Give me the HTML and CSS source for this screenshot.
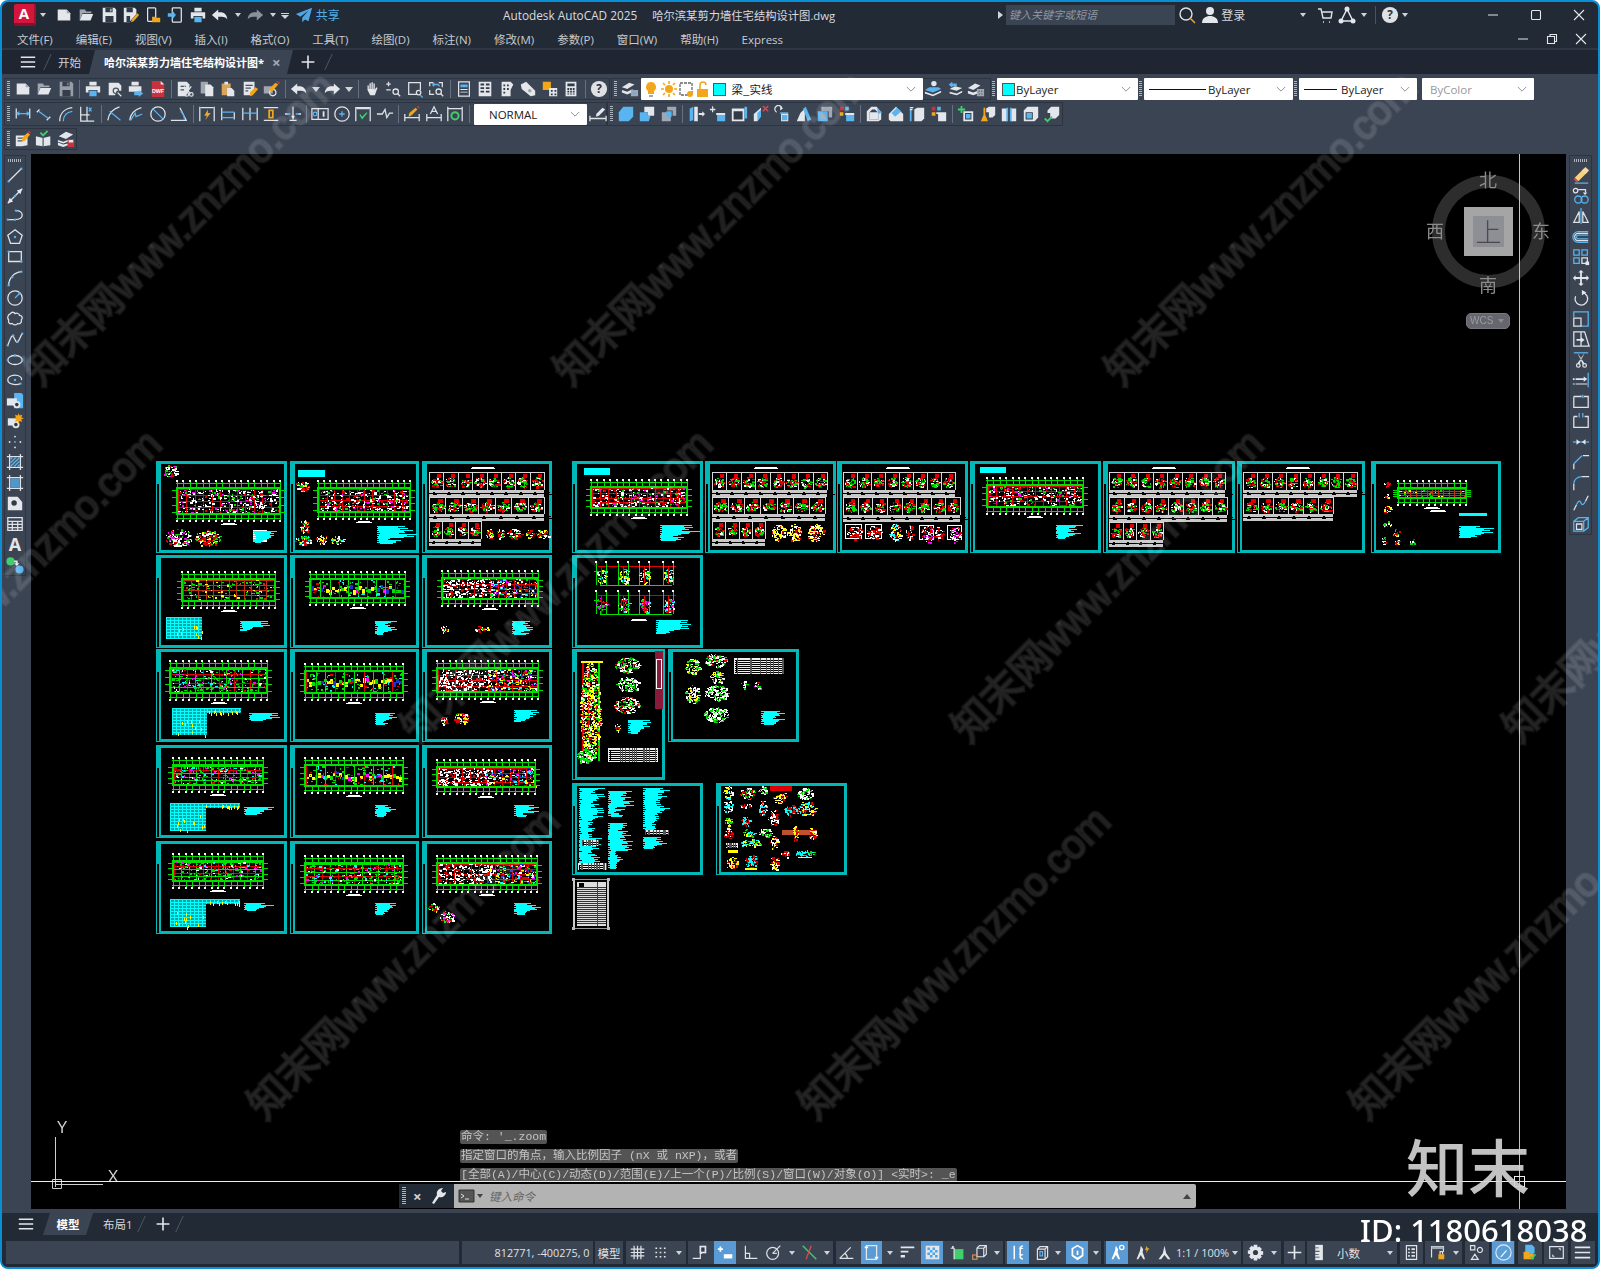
FILE: index.html
```html
<!DOCTYPE html>
<html lang="zh-CN">
<head>
<meta charset="utf-8">
<title>Autodesk AutoCAD 2025</title>
<link rel="stylesheet" href="styles.css">
</head>
<body>
<svg class="sprite" xmlns="http://www.w3.org/2000/svg">
<symbol id="new" viewBox="0 0 20 20"><path class="f" d="M3 4h10l4 4v8H3z"/><path class="g" d="M13 4l4 4h-4z"/></symbol>
<symbol id="open" viewBox="0 0 20 20"><path class="g" d="M3 4h6l1 2h6v2H6l-3 8z"/><path class="f" d="M6 9h12l-3 7H3z"/></symbol>
<symbol id="save" viewBox="0 0 20 20"><path class="f" d="M3 2h13l2 2v14H3z"/><path class="k" d="M6 2h8v5H6zM6 11h9v7H6z"/><path class="g" d="M11 3h2v3h-2z"/></symbol>
<symbol id="saveas" viewBox="0 0 20 20"><path class="f" d="M2 2h12l2 2v5l-7 8v1H2z"/><path class="k" d="M5 2h7v5H5zM5 11h4v7H5z"/><path class="y" d="M11 15l6-7 2 2-6 7-3 1z"/></symbol>
<symbol id="mopen" viewBox="0 0 20 20"><rect class="s" x="4" y="2" width="9" height="15" rx="1"/><path class="y" d="M9 12h4l1 1h4v5H9z"/></symbol>
<symbol id="msend" viewBox="0 0 20 20"><rect class="s" x="7" y="2" width="10" height="16" rx="1"/><path class="u" d="M2 8h5V5l4 5-4 5v-3H2z"/></symbol>
<symbol id="plot" viewBox="0 0 20 20"><path class="f" d="M6 2h8v4H6zM2 7h16v7h-3v-3H5v3H2z"/><path class="u" d="M6 12h8v6H6z"/></symbol>
<symbol id="preview" viewBox="0 0 20 20"><path class="f" d="M3 3h11l3 3v6h-5l-2 5H3z"/><circle class="d" cx="11" cy="12" r="3"/><path class="s" d="M13 14l4 4"/></symbol>
<symbol id="publish" viewBox="0 0 20 20"><path class="f" d="M5 2h8v4H5zM2 7h14v6H2z"/><path class="u" d="M8 13h5v-2l5 4-5 4v-2H8z"/></symbol>
<symbol id="dwf" viewBox="0 0 20 20"><path class="r" d="M3 1h10l4 4v14H3z"/><path class="f" d="M13 1l4 4h-4z"/><text class="tdwf" x="10" y="14">DWF</text></symbol>
<symbol id="cut" viewBox="0 0 20 20"><path class="f" d="M2 2h10l3 3v5l-4 8H2z"/><path class="d" d="M5 7h6M5 11h4"/><circle class="s" cx="12" cy="16" r="2"/><circle class="s" cx="17" cy="16" r="2"/><path class="s" d="M9 7l7 8M17 7l-6 8"/></symbol>
<symbol id="copy" viewBox="0 0 20 20"><path class="g" d="M3 2h8v13H3z"/><path class="f" d="M8 5h6l3 3v10H8z"/></symbol>
<symbol id="paste" viewBox="0 0 20 20"><path class="t" d="M3 4h10v13H3z"/><path class="f" d="M6 2h4v3H6zM9 9h5l3 3v6H9z"/></symbol>
<symbol id="match" viewBox="0 0 20 20"><path class="f" d="M3 2h12v9l-5 6H3z"/><path class="d" d="M5 6h8M5 9h6M5 12h3"/><path class="y" d="M10 14l6-6 3 2-6 7-3 1z"/></symbol>
<symbol id="bedit" viewBox="0 0 20 20"><path class="g" d="M2 7h10v8H2z"/><circle class="s" cx="12" cy="14" r="3.5"/><path class="y" d="M9 9l6-6 3 2-6 7-3 1z"/><path class="r" d="M16 2l2-1 2 2-1 2z"/></symbol>
<symbol id="undo" viewBox="0 0 20 20"><path class="f" d="M8 4L1 10l7 6v-4h4c3 0 5 1 6 3 0-5-3-8-8-8H8z"/></symbol>
<symbol id="redo" viewBox="0 0 20 20"><path class="f" d="M12 4l7 6-7 6v-4H8c-3 0-5 1-6 3 0-5 3-8 8-8h2z"/></symbol>
<symbol id="pan" viewBox="0 0 20 20"><path class="f" d="M5 11V6h1.5v4h.7V3.5h1.5V10h.7V2.500h1.500V10h.7V4h1.500v7l1.500-3 1.500.8-3 8.200H8z"/></symbol>
<symbol id="zoomr" viewBox="0 0 20 20"><path class="s" d="M5 2v5M2.500 4.500h5M2.500 11h5"/><circle class="s" cx="13" cy="13" r="3"/><path class="s" d="M15 15l3 3"/></symbol>
<symbol id="zoomw" viewBox="0 0 20 20"><path class="s" d="M12 16H3V3h13v8"/><circle class="s" cx="14" cy="14" r="2.500"/><path class="u" d="M16 16l3 3-1 1-3-3z"/></symbol>
<symbol id="zoomp" viewBox="0 0 20 20"><path class="s" d="M3 7V3h4M13 3h4v5M3 11v5h5"/><path class="b" d="M6 5h6l2 2M6 5l2-2M6 5l2 2"/><circle class="s" cx="13" cy="13" r="3"/><path class="s" d="M15 15l3 3"/></symbol>
<symbol id="props" viewBox="0 0 20 20"><path class="s" d="M4 2h12v16H4z"/><path class="u" d="M6 5h8v3H6z"/><path class="f" d="M6 10h8v1H6zM6 13h8v1H6z"/></symbol>
<symbol id="sset" viewBox="0 0 20 20"><path class="f" d="M3 2h14v16H3z"/><path class="k" d="M5 4h4v2H5zM11 4h4v2h-4zM5 8h4v2H5zM11 8h4v2h-4zM5 12h4v2H5zM11 12h4v2h-4z"/></symbol>
<symbol id="tpal" viewBox="0 0 20 20"><path class="f" d="M4 2h10l3 3-3 6v7H4z"/><path class="k" d="M6 5h2v2H6zM10 5h2v2h-2zM6 9h2v2H6zM10 9h2v2h-2zM6 13h2v2H6z"/></symbol>
<symbol id="dcent" viewBox="0 0 20 20"><path class="f" d="M2 5l6-3 10 10v5l-5 1L3 10z"/><circle class="g" cx="12" cy="12" r="2"/></symbol>
<symbol id="mark" viewBox="0 0 20 20"><path class="y" d="M2 2h9v9H2z"/><path class="f" d="M9 9h9v9H9z"/><path class="k" d="M11 11h2v2h-2zM15 11h2v2h-2zM11 15h2v2h-2zM15 15h2v2h-2z"/></symbol>
<symbol id="calc" viewBox="0 0 20 20"><path class="f" d="M4 2h12v16H4z"/><path class="k" d="M6 4h8v3H6zM6 9h2v2H6zM9 9h2v2H9zM12 9h2v2h-2zM6 12h2v2H6zM9 12h2v2H9zM12 12h2v2h-2zM6 15h2v1H6zM9 15h2v1H9zM12 15h2v1h-2z"/></symbol>
<symbol id="help" viewBox="0 0 20 20"><circle class="h" cx="10" cy="10" r="9"/><text class="thelp" x="10" y="14.500">?</text></symbol>
<symbol id="lyr" viewBox="0 0 20 20"><path class="f" d="M1 8l8-5 6 2-8 5zM1 11l6 2 6-3-1 4-5 2-6-2z"/><path class="g" d="M11 11h8v7h-8z"/><path class="u" d="M13 14h4v2h-4z"/></symbol>
<symbol id="lyr1" viewBox="0 0 20 20"><circle class="f" cx="11" cy="4" r="3"/><path class="u" d="M6 8h10l3 2-9 4-9-3z"/><path class="f" d="M1 13l9 3 9-4v2l-9 4-9-3z"/></symbol>
<symbol id="lyr2" viewBox="0 0 20 20"><path class="u" d="M3 5l4-3v2h5v3H7v2z"/><path class="f" d="M4 10l6-3 8 2-6 3zM4 13l8 2 6-3v2l-6 3-8-2z"/></symbol>
<symbol id="lyr3" viewBox="0 0 20 20"><path class="f" d="M1 9l8-5 6 2-8 5zM1 12l6 2 5-2v3l-5 2-6-2z"/><path class="g" d="M11 10h8v8h-8z"/><path class="k" d="M13 12h1v1h-1zM16 12h1v1h-1zM13 15h1v1h-1zM16 15h1v1h-1z"/></symbol>
<symbol id="dl" viewBox="0 0 20 20"><path class="s" d="M2.500 4v11M17.500 4v11"/><path class="b" d="M3 9.500h14M3 9.500l3-2M3 9.500l3 2M17 9.500l-3-2M17 9.500l-3 2"/></symbol>
<symbol id="da" viewBox="0 0 20 20"><path class="s" d="M2 8l3-3M13 17l4-4"/><path class="b" d="M4 7l11 8"/></symbol>
<symbol id="darc" viewBox="0 0 20 20"><path class="s" d="M3 18C3 9 9 4 17 3"/><path class="b" d="M7 18c0-6 4-10 10-11"/></symbol>
<symbol id="dord" viewBox="0 0 20 20"><path class="s" d="M3 2v16h15M3 11h10M10 2v16"/><path class="b" d="M12 3l3 4M15 3l-3 4"/></symbol>
<symbol id="drad" viewBox="0 0 20 20"><path class="s" d="M2 17C3 9 8 4 15 2"/><path class="b" d="M4 7l12 10"/></symbol>
<symbol id="djog" viewBox="0 0 20 20"><path class="s" d="M3 17C4 9 9 5 16 3"/><path class="b" d="M4 17l5-8 1 4 7-3"/></symbol>
<symbol id="ddia" viewBox="0 0 20 20"><circle class="s" cx="10" cy="10" r="8"/><path class="b" d="M4 4l12 12"/></symbol>
<symbol id="dang" viewBox="0 0 20 20"><path class="s" d="M1 17h17L11 3"/><path class="b" d="M12 7c3 3 4 6 4 9"/></symbol>
<symbol id="qdim" viewBox="0 0 20 20"><path class="s" d="M2 2v16M18 2v16M3 3h14"/><path class="y" d="M11 5l-4 7h3l-2 5 6-8h-3z"/></symbol>
<symbol id="dbase" viewBox="0 0 20 20"><path class="s" d="M3 3v14M17 8v8"/><path class="b" d="M3 8h14M3 14h14"/></symbol>
<symbol id="dcont" viewBox="0 0 20 20"><path class="s" d="M2 3v14M10 3v14M18 3v14"/><path class="b" d="M2 9h16"/></symbol>
<symbol id="dsp" viewBox="0 0 20 20"><path class="s" d="M2 3h16M2 17h16"/><path class="y" d="M7 5h6v10H7z"/><path class="k" d="M9 7h2v6H9z"/></symbol>
<symbol id="dbrk" viewBox="0 0 20 20"><path class="s" d="M10 2v12M6 17h8M4 10H1M19 10h-3"/><path class="b" d="M3 10h4M13 10h4"/><path class="f" d="M8 12h4l-2 5z"/></symbol>
<symbol id="tol" viewBox="0 0 20 20"><path class="s" d="M1 4h18v12H1zM8 4v12"/><circle class="b" cx="4.500" cy="10" r="2"/><path class="f" d="M13 7h2v6h-2z"/></symbol>
<symbol id="cm" viewBox="0 0 20 20"><circle class="s" cx="10" cy="10" r="8"/><path class="b" d="M7 10h6M10 7v6"/></symbol>
<symbol id="insp" viewBox="0 0 20 20"><path class="s" d="M2 18V3h16v15M3 4h14"/><path class="n" d="M6 11l1-1 2 3 5-5 1 1-6 7z"/></symbol>
<symbol id="djl" viewBox="0 0 20 20"><path class="s" d="M1 10h6l3-5 2 9 3-5h4"/></symbol>
<symbol id="dedit" viewBox="0 0 20 20"><path class="s" d="M2 10v8M18 10v8M2 14h16"/><path class="y" d="M7 9l7-6 2 2-7 7-3 1z"/><path class="r" d="M15 2l2-1 2 2-2 1z"/></symbol>
<symbol id="dtxt" viewBox="0 0 20 20"><path class="s" d="M2 10v8M18 10v8M2 14h16M6 10l4-8 4 8M8 7h4"/></symbol>
<symbol id="dupd" viewBox="0 0 20 20"><path class="s" d="M2 2v16M18 2v16M2 4h16"/><circle class="ng" cx="10" cy="12" r="4"/></symbol>
<symbol id="dsty" viewBox="0 0 20 20"><path class="s" d="M1 12v6M19 12v6M1 15h18"/><path class="f" d="M8 10l7-7 3 2-7 7-3 1z"/></symbol>
<symbol id="sol1" viewBox="0 0 20 20"><path class="u" d="M7 2h11v11l-5 5H2V8z"/></symbol>
<symbol id="sol2" viewBox="0 0 20 20"><path class="f" d="M7 2h11v10h-7V8H7z"/><path class="u" d="M2 8h9v4h3l-2 6H2z"/></symbol>
<symbol id="sol3" viewBox="0 0 20 20"><path class="g" d="M8 2h10v10h-4V6H8z"/><path class="g" d="M2 8h10v10H2z"/><path class="u" d="M7 7h6v6H7z"/></symbol>
<symbol id="sf1" viewBox="0 0 20 20"><path class="u" d="M3 4l4-2v15l-4 1z"/><path class="f" d="M8 2h4v16H8z"/><path class="f" d="M13 9h4V7l3 3-3 3v-2h-4z"/></symbol>
<symbol id="sf2" viewBox="0 0 20 20"><path class="f" d="M4 2v6M1 5h6M4 1L3 2h2zM1 5l1-1v2zM7 5l-1-1v2z"/><path class="s" d="M4 2v6M1 5h6"/><path class="f" d="M8 9h10v2H8z"/><path class="u" d="M9 11h9v7H9z"/></symbol>
<symbol id="sf3" viewBox="0 0 20 20"><path class="f" d="M2 4h14v14H2z"/><path class="k" d="M4 7h10v9H4z"/><path class="u" d="M16 2h3v13h-3z"/></symbol>
<symbol id="sf4" viewBox="0 0 20 20"><path class="f" d="M2 10l8-7v9l-4 6H2z"/><path class="u" d="M6 9l4-4v8l-4 5z"/><path class="xr" d="M12 1l6 6M18 1l-6 6"/></symbol>
<symbol id="sf5" viewBox="0 0 20 20"><path class="s" d="M10 4a4 4 0 1 0-6 4"/><path class="f" d="M8 2l3 2-3 2z"/><path class="u" d="M8 8h9v2H8z"/><path class="f" d="M9 10h8v8H9z"/><path class="u" d="M10 11h6v6h-6z"/></symbol>
<symbol id="sf6" viewBox="0 0 20 20"><path class="f" d="M2 18l4-9 5-5v14z"/><path class="u" d="M9 4l3-2 6 14-4 2z"/></symbol>
<symbol id="sf7" viewBox="0 0 20 20"><path class="g" d="M6 2h12v12h-4V7H6z"/><path class="u" d="M2 7h11v11H2z"/><path class="g" d="M5 10h5v5H5z"/></symbol>
<symbol id="sf8" viewBox="0 0 20 20"><path class="r" d="M2 2h4v4H2z"/><path class="u" d="M8 2h4v4H8z"/><path class="y" d="M2 8h4v4H2z"/><path class="f" d="M8 9h10v2H8z"/><path class="u" d="M9 11h9v7H9z"/></symbol>
<symbol id="im1" viewBox="0 0 20 20"><path class="f" d="M2 18V7l5-5h6l5 6v8l-3 2zM5 16h10V9l-4-4H8L5 8z"/><path class="f" d="M5 8h10v8H5z"/><path class="u" d="M13 3l6 5-4 2z"/></symbol>
<symbol id="im2" viewBox="0 0 20 20"><path class="f" d="M2 16V10l8-8 8 8v8H4z"/><path class="u" d="M5 9l6-6 5 4-7 6z"/></symbol>
<symbol id="im3" viewBox="0 0 20 20"><path class="u" d="M2 5h2v13H2z"/><path class="s" d="M2 5h3M2 3h4"/><path class="f" d="M7 5l3-2h8v12l-3 3H7z"/></symbol>
<symbol id="im4" viewBox="0 0 20 20"><path class="r" d="M2 2h4v4H2z"/><path class="u" d="M8 2h4v4H8z"/><path class="y" d="M2 8h4v4H2z"/><path class="f" d="M7 8h11v2H7zM9 10h9v8H9z"/></symbol>
<symbol id="im5" viewBox="0 0 20 20"><path class="n" d="M4 1h2v3h3v2H6v3H4V6H1V4h3z"/><path class="f" d="M7 7h11v11H7z"/><path class="k" d="M9 9h7v7H9z"/><path class="u" d="M10 10h5v5h-5z"/></symbol>
<symbol id="im6" viewBox="0 0 20 20"><path class="f" d="M8 4l3-2h7v9l-3 3h-4V8H8z"/><path class="y" d="M5 3h2v8H5zM2 18l3-7h2l3 7z"/></symbol>
<symbol id="im7" viewBox="0 0 20 20"><path class="f" d="M2 4h6v14H2zM12 4h6v14h-6z"/><path class="u" d="M7 3h2v15H7zM11 3h2v15h-2z"/></symbol>
<symbol id="im8" viewBox="0 0 20 20"><path class="f" d="M2 6l4-4h12v12l-4 4H2z"/><path class="k" d="M4 8h8v8H4z"/><path class="u" d="M5 9h6v6H5z"/></symbol>
<symbol id="im9" viewBox="0 0 20 20"><path class="f" d="M5 6l4-4h9v9l-4 4H8V9H5z"/><path class="nl" d="M2 15l3 3 5-5"/></symbol>
<symbol id="nt1" viewBox="0 0 20 20"><path class="f" d="M2 6h13v11l-6 1H2z"/><path class="d" d="M4 9h7M4 12h5"/><path class="y" d="M9 9l6-6 3 2-6 7-3 1z"/><path class="r" d="M15 2l2-1 2 2-2 1z"/></symbol>
<symbol id="nt2" viewBox="0 0 20 20"><path class="f" d="M1 7l8 2 8-2v10l-8 1-8-1z"/><path class="d" d="M9 9v9"/><path class="nl" d="M6 3l3 3 5-5"/></symbol>
<symbol id="nt3" viewBox="0 0 20 20"><path class="f" d="M2 7l8-5 8 3-8 5zM1 11l6 2 5-2v2l-5 2-6-2zM1 14l6 2 5-1v2l-5 2-6-2z"/><path class="r" d="M12 10h7v9h-7z"/><path class="f" d="M13 11h5v3h-5z"/></symbol>
<symbol id="line" viewBox="0 0 20 20"><path class="s" d="M3 17L17 3"/><circle class="u" cx="3" cy="17" r="1.300"/><circle class="u" cx="17" cy="3" r="1.300"/></symbol>
<symbol id="xline" viewBox="0 0 20 20"><path class="s" d="M2 18l16-16"/><path class="f" d="M2 18l2-6 4 4zM18 2l-2 6-4-4z"/><circle class="u" cx="10" cy="10" r="1.300"/></symbol>
<symbol id="pl" viewBox="0 0 20 20"><path class="s" d="M2 14h8c5 0 8-2 8-5s-3-5-7-5"/><circle class="u" cx="2" cy="14" r="1.300"/><circle class="u" cx="10" cy="14" r="1.300"/><circle class="u" cx="11" cy="4" r="1.300"/></symbol>
<symbol id="pgon" viewBox="0 0 20 20"><path class="s" d="M10 2l8 6-3 9H5L2 8z"/><circle class="u" cx="10" cy="10" r="1.300"/></symbol>
<symbol id="rect" viewBox="0 0 20 20"><path class="s" d="M3 4h14v11H3z"/><circle class="u" cx="3" cy="4" r="1.300"/><circle class="u" cx="17" cy="15" r="1.300"/></symbol>
<symbol id="arc" viewBox="0 0 20 20"><path class="s" d="M3 18C3 10 9 4 17 3"/><circle class="u" cx="3" cy="18" r="1.300"/><circle class="u" cx="7" cy="9" r="1.300"/><circle class="u" cx="17" cy="3" r="1.300"/></symbol>
<symbol id="circ" viewBox="0 0 20 20"><circle class="s" cx="10" cy="10" r="8"/><path class="b" d="M10 10l5-5"/><circle class="u" cx="15" cy="5" r="1.300"/></symbol>
<symbol id="cloud" viewBox="0 0 20 20"><path class="s" d="M5 4c1-2 4-2 5 0 2-1 5 0 5 2 3 0 4 3 2 5 1 3-2 5-4 4-1 2-5 2-6 0-3 1-5-1-4-4-2-2-1-6 2-7z"/></symbol>
<symbol id="spl" viewBox="0 0 20 20"><path class="s" d="M2 17c2-5 4-12 6-10 2 3 3 8 5 6s3-6 5-9"/><circle class="u" cx="2" cy="17" r="1.300"/><circle class="u" cx="8" cy="6" r="1.300"/><circle class="u" cx="13" cy="13" r="1.300"/><circle class="u" cx="18" cy="4" r="1.300"/></symbol>
<symbol id="ell" viewBox="0 0 20 20"><ellipse class="s" cx="10" cy="10" rx="8" ry="5"/><circle class="u" cx="2" cy="10" r="1.300"/><circle class="u" cx="18" cy="10" r="1.300"/><circle class="u" cx="10" cy="5" r="1.300"/></symbol>
<symbol id="ella" viewBox="0 0 20 20"><path class="s" d="M16 14c-5 2-14 1-14-4s7-6 11-5 5 4 4 5"/><circle class="u" cx="16" cy="14" r="1.300"/><circle class="u" cx="10" cy="10" r="1.300"/></symbol>
<symbol id="ins" viewBox="0 0 20 20"><path class="u" d="M9 1h8l2 2v15H9z"/><path class="f" d="M1 7h11v8H1z"/><circle class="f" cx="12" cy="14" r="4"/><circle class="k" cx="12" cy="14" r="2"/></symbol>
<symbol id="blk" viewBox="0 0 20 20"><path class="f" d="M2 7h11v8H2z"/><circle class="f" cx="11" cy="14" r="4"/><circle class="k" cx="11" cy="14" r="2"/><path class="y" d="M14 1l1 3 3-1-1 3 3 1-3 1 1 3-3-1-1 3-1-3-3 1 1-3-3-1 3-1-1-3 3 1z"/></symbol>
<symbol id="pt" viewBox="0 0 20 20"><circle class="f" cx="10" cy="4" r="1"/><circle class="f" cx="4" cy="10" r="1"/><circle class="f" cx="16" cy="10" r="1"/><circle class="f" cx="10" cy="16" r="1"/><circle class="u" cx="10" cy="10" r="1"/></symbol>
<symbol id="hat" viewBox="0 0 20 20"><path class="s" d="M1 4h18M1 16h18M4 1v18M16 1v18"/><path class="u" d="M5 5h10v10H5z"/><path class="d" d="M5 9l4-4M5 13l8-8M7 15l8-8M11 15l4-4"/></symbol>
<symbol id="grad" viewBox="0 0 20 20"><path class="s" d="M1 4h18M1 16h18M4 1v18M16 1v18"/><path class="gr" d="M5 5h10v10H5z"/></symbol>
<symbol id="reg" viewBox="0 0 20 20"><path class="f" d="M2 3h11l5 6v9H2z"/><circle class="k" cx="9" cy="10" r="3"/></symbol>
<symbol id="tbl" viewBox="0 0 20 20"><path class="s" d="M2 3h16v14H2zM2 7h16M2 10.500h16M2 14h16M7 7v10M13 7v10"/></symbol>
<symbol id="addsel" viewBox="0 0 20 20"><circle class="n" cx="5" cy="6" r="4.500"/><circle class="u" cx="15" cy="15" r="4.500"/><path class="f" d="M9 5h4v3h2l-3 3-3-3h2V7H9z"/></symbol>
<symbol id="era" viewBox="0 0 20 20"><path class="y2" d="M3 13l10-10 4 4-10 10z"/><path class="fr" d="M3 13l4 4-2 1-3-3z"/><path class="fw" d="M11 5l4-4 4 4-4 4z"/><path class="b" d="M3 19h15"/></symbol>
<symbol id="cop" viewBox="0 0 20 20"><circle class="s" cx="4" cy="4" r="2.500"/><path class="s" d="M7 3h8v3"/><path class="f" d="M12 6h5l-2.500 3z"/><circle class="b" cx="7" cy="14" r="4"/><circle class="b" cx="14" cy="14" r="4"/></symbol>
<symbol id="mir" viewBox="0 0 20 20"><path class="s" d="M8 5L2 17h6zM12 5l6 12h-6z"/><path class="b" d="M10 1v18"/></symbol>
<symbol id="off" viewBox="0 0 20 20"><path class="b" d="M18 4H7a6 6 0 0 0 0 12h11M18 8H7a2 2 0 0 0 0 4h11"/><path class="s" d="M18 6H7a4 4 0 0 0 0 8h11"/></symbol>
<symbol id="arr" viewBox="0 0 20 20"><path class="b" d="M2 2h6v6H2zM11 2h6v6h-6zM2 11h6v6H2z"/><path class="s" d="M11 11h6v6h-6z"/><path class="f" d="M15 15h4v4h-4z"/></symbol>
<symbol id="mov" viewBox="0 0 20 20"><path class="f" d="M10 1l3 3h-2v5h5V7l3 3-3 3v-2h-5v5h2l-3 3-3-3h2v-5H4v2l-3-3 3-3v2h5V4H7z"/></symbol>
<symbol id="rot" viewBox="0 0 20 20"><path class="s" d="M12 4a7 7 0 1 1-8 4"/><path class="f" d="M11 1l5 3-5 3z"/></symbol>
<symbol id="sca" viewBox="0 0 20 20"><path class="b" d="M2 8V2h16v16h-8"/><path class="s" d="M2 9h8v9H2z"/></symbol>
<symbol id="str" viewBox="0 0 20 20"><path class="s" d="M2 2h8v16H2zM10 2h4l5 16h-9"/><path class="f" d="M5 10h5V8l4 3-4 3v-2H5z"/></symbol>
<symbol id="trim" viewBox="0 0 20 20"><path class="b" d="M2 2h16"/><circle class="s" cx="7" cy="16" r="2"/><circle class="s" cx="14" cy="16" r="2"/><path class="f" d="M6 2l8 12-2 1zM14 2L6 14l2 1z"/></symbol>
<symbol id="ext" viewBox="0 0 20 20"><path class="b" d="M18 2v16"/><path class="f" d="M4 8h9V6l4 3-4 3v-2H4zM4 14h13v1H4zM1 8h2v2H1zM1 14h2v1H1z"/></symbol>
<symbol id="brkp" viewBox="0 0 20 20"><path class="s" d="M2 5h8v-1M13 5h5v12H2V5"/><path class="b" d="M12 3v4"/></symbol>
<symbol id="brk" viewBox="0 0 20 20"><path class="s" d="M2 5v12h16V5h-4M6 5H2"/><path class="b" d="M8 1v5M12 1v5"/></symbol>
<symbol id="join" viewBox="0 0 20 20"><path class="b" d="M1 10h18"/><path class="f" d="M5 7l4 3-4 3zM15 7l-4 3 4 3z"/></symbol>
<symbol id="cha" viewBox="0 0 20 20"><path class="s" d="M2 18v-6M12 3h7"/><path class="b" d="M2 12l9-9"/></symbol>
<symbol id="fil" viewBox="0 0 20 20"><path class="s" d="M2 18v-7M11 3h8"/><path class="b" d="M2 11c0-5 4-8 9-8"/></symbol>
<symbol id="ble" viewBox="0 0 20 20"><path class="s" d="M2 18l3-6M15 8l3-6"/><path class="b" d="M5 12c2-5 4-5 5-2s3 2 5-2"/></symbol>
<symbol id="expl" viewBox="0 0 20 20"><path class="b" d="M2 7l5-4h11v11l-5 4H2zM2 7h11v11M13 7l5-4"/><path class="s" d="M5 10h6v6H5z"/></symbol>
<symbol id="ham" viewBox="0 0 20 20"><path class="f" d="M1 3h18v2H1zM1 9h18v2H1zM1 15h18v2H1z"/></symbol>
<symbol id="share" viewBox="0 0 20 20"><path class="ub" d="M19 2L1 9l5 3 9-7-7 8v5l3-3 4 2z"/></symbol>
<symbol id="grid" viewBox="0 0 20 20"><path class="s" d="M2 6h16M2 10h16M2 14h16M6 2v16M10 2v16M14 2v16"/></symbol>
<symbol id="dots" viewBox="0 0 20 20"><path class="f" d="M4 4h2v2H4zM9 4h2v2H9zM14 4h2v2h-2zM4 9h2v2H4zM9 9h2v2H9zM14 9h2v2h-2zM4 14h2v2H4zM9 14h2v2H9zM14 14h2v2h-2z"/></symbol>
<symbol id="infer" viewBox="0 0 20 20"><path class="s" d="M2 17h9V11h2"/><path class="f" d="M10 2h8v9h-8z"/><path class="k" d="M12 4h4v5h-4z"/></symbol>
<symbol id="dyn" viewBox="0 0 20 20"><path class="w" d="M3 3h2v2h2v2H5v2H3V7H1V5h2z"/><path class="w" d="M8 12h10v5H8z"/></symbol>
<symbol id="orth" viewBox="0 0 20 20"><path class="s" d="M4 2v15h14M4 11h5v6"/></symbol>
<symbol id="pol" viewBox="0 0 20 20"><circle class="s" cx="9" cy="11" r="7"/><path class="s" d="M9 11l9-9"/><path class="s" d="M9 11h5"/></symbol>
<symbol id="osn" viewBox="0 0 20 20"><path class="xg" d="M2 2l16 16"/><path class="xr" d="M12 2L6 18"/></symbol>
<symbol id="iso" viewBox="0 0 20 20"><path class="s" d="M2 17h16M2 17L15 4M11 17c0-3-1-5-3-6"/></symbol>
<symbol id="dsp2" viewBox="0 0 20 20"><path class="s2" d="M4 2h12v16H4z"/><path class="w" d="M2 3h4v2H2zM14 15h4v2h-4z"/></symbol>
<symbol id="lw" viewBox="0 0 20 20"><path class="f" d="M2 3h16v2H2zM2 8h9v2H2zM2 13h5v3H2z"/></symbol>
<symbol id="trn" viewBox="0 0 20 20"><path class="f" d="M2 2h16v16H2z"/><path class="ub" d="M4 4h3v3H4zM10 4h3v3h-3zM7 7h3v3H7zM13 7h3v3h-3zM4 10h3v3H4zM10 10h3v3h-3zM7 13h3v3H7zM13 13h3v3h-3z"/></symbol>
<symbol id="sel" viewBox="0 0 20 20"><path class="f" d="M4 2l2 1-1 2H3z"/><path class="n" d="M6 6h11v12H6z"/><path class="s" d="M2 5h4v13"/></symbol>
<symbol id="cube" viewBox="0 0 20 20"><path class="s" d="M7 5l3-3h8v10l-3 3H7zM7 5h8v10M15 5l3-3"/><path class="t2" d="M2 13h5v5H2z"/></symbol>
<symbol id="sma" viewBox="0 0 20 20"><path class="w2" d="M5 2v16M15 2l-3 2v12l3 2"/><path class="w" d="M3 10h3M10 6h6l-2-2M10 12h6l-2 2"/></symbol>
<symbol id="box3" viewBox="0 0 20 20"><path class="s" d="M4 6l3-3h9v12l-3 3H4zM4 6h9v12M13 6l3-3"/><path class="b" d="M7 9h3v5H7z"/></symbol>
<symbol id="gizmo" viewBox="0 0 20 20"><path class="w" d="M10 1l7 4v9l-7 5-7-5V5zM5 6v7l5 3 5-3V6l-5-3zM9 8h2v5H9z"/></symbol>
<symbol id="ann1" viewBox="0 0 20 20"><path class="w" d="M7 8L3 18h2l3-5 3 5h2L10 9c1-1 1-3 0-4L8 2z"/><circle class="ubb" cx="15" cy="4" r="2.500"/></symbol>
<symbol id="ann2" viewBox="0 0 20 20"><path class="f" d="M7 8L3 18h2l3-5 3 5h2L10 9c1-1 1-3 0-4L8 2z"/><path class="y" d="M15 2l-2 5h2l-1 4 4-6h-2z"/></symbol>
<symbol id="ann3" viewBox="0 0 20 20"><path class="f" d="M10 2l2 9 5 7h-3l-4-5-4 5H3l5-7z"/></symbol>
<symbol id="gear" viewBox="0 0 20 20"><path class="f" d="M8 1h4l.5 3 2-1 3 3-1.500 2 3 .5v4l-3 .5 1.500 2-3 3-2-1.500-.5 3H8l-.5-3-2 1.500-3-3L4 12l-3-.5v-4L4 7 2.500 5l3-3 2 1.500z"/><circle class="k" cx="10" cy="10" r="3"/></symbol>
<symbol id="plus" viewBox="0 0 20 20"><path class="f" d="M9 2h2v7h7v2h-7v7H9v-7H2V9h7z"/></symbol>
<symbol id="ruler" viewBox="0 0 20 20"><path class="f" d="M5 1h9v18H5z"/><path class="k" d="M5 4h4v1H5zM5 8h5v1H5zM5 12h4v1H5zM5 15h5v1H5z"/></symbol>
<symbol id="qp" viewBox="0 0 20 20"><path class="s" d="M4 2h12v16H4z"/><path class="f" d="M6 5h2v2H6zM10 5h4v2h-4zM6 9h2v2H6zM10 9h4v2h-4zM6 13h2v2H6zM10 13h4v2h-4z"/></symbol>
<symbol id="lock" viewBox="0 0 20 20"><path class="s" d="M3 16V3h14v6"/><path class="g" d="M3 3h14v3H3z"/><path class="y" d="M11 12h7v6h-7z"/><path class="s" d="M13 12V9h3v3"/></symbol>
<symbol id="iso2" viewBox="0 0 20 20"><path class="s" d="M3 2h5v5H3zM14 4a3 3 0 1 0 .1 0zM8 12l4 6H4z"/></symbol>
<symbol id="hw" viewBox="0 0 20 20"><circle class="h2" cx="10" cy="10" r="9"/><path class="w" d="M7 14l6-7 1 1-6 7-2 1z"/></symbol>
<symbol id="annm" viewBox="0 0 20 20"><path class="u" d="M5 1h8l3 3v7H5z"/><path class="y" d="M3 9h6l1 2h5v7H3z"/><path class="nl" d="M11 15l2 2 4-5"/></symbol>
<symbol id="full" viewBox="0 0 20 20"><path class="s" d="M2 3h16v14H2z"/><path class="f" d="M5 15l3-3M15 5l-3 3M5 15h3l-3-3zM15 5h-3l3 3z"/></symbol>
<symbol id="chev" viewBox="0 0 12 8"><path class="cv" d="M1 1l5 5 5-5"/></symbol>
</svg>

<div class="win">
  <header class="titlebar">
    <div class="qat">
      <div class="logo"><span>A</span></div><i class="dd ddt"></i>
      <svg class="ic"><use href="#new"/></svg><svg class="ic"><use href="#open"/></svg><svg class="ic"><use href="#save"/></svg><svg class="ic"><use href="#saveas"/></svg><svg class="ic"><use href="#mopen"/></svg><svg class="ic"><use href="#msend"/></svg><svg class="ic"><use href="#plot"/></svg><svg class="ic"><use href="#undo"/></svg><i class="dd ddt"></i><svg class="ic dim"><use href="#redo"/></svg><i class="dd ddt"></i><i class="ddl"></i>
      <svg class="ic"><use href="#share"/></svg><span class="sharetxt">共享</span>
    </div>
    <div class="apptitle"><span>Autodesk AutoCAD 2025</span><span class="fname">哈尔滨某剪力墙住宅结构设计图.dwg</span></div>
    <i class="tri"></i>
    <div class="search">键入关键字或短语</div>
    <svg class="ic"><circle class="s" cx="8" cy="8" r="6"/><path class="lens" d="M12 12l5 5"/></svg>
    <svg class="ic user"><circle class="f" cx="9" cy="5" r="4"/><path class="f" d="M1 17c0-5 4-7 8-7s8 2 8 7z"/></svg>
    <span class="login">登录</span>
    <i class="dd ddlogin"></i>
    <svg class="ic cart"><path class="s" d="M2 3h3l2 9h8l1-6H6M7 16h1M13 16h1"/></svg>
    <svg class="ic"><path class="s2" d="M9 3L3 15M9 3l6 12M3 15h12"/><circle class="f" cx="9" cy="3" r="2.500"/><circle class="f" cx="3" cy="15" r="2.500"/><circle class="f" cx="15" cy="15" r="2.500"/></svg>
    <i class="dd ddt"></i><i class="vsep"></i>
    <svg class="ic helpic"><use href="#help"/></svg><i class="dd ddt"></i>
    <div class="winbtns">
      <svg class="wb"><path class="wl" d="M3 8h10"/></svg>
      <svg class="wb"><rect class="wl" x="3.500" y="3.500" width="9" height="9" rx="1"/></svg>
      <svg class="wb"><path class="wl" d="M3 3l10 10M13 3L3 13"/></svg>
    </div>
  </header>

  <nav class="menubar">
    <span>文件(F)</span><span>编辑(E)</span><span>视图(V)</span><span>插入(I)</span><span>格式(O)</span><span>工具(T)</span><span>绘图(D)</span><span>标注(N)</span><span>修改(M)</span><span>参数(P)</span><span>窗口(W)</span><span>帮助(H)</span><span>Express</span>
    <div class="docbtns">
      <svg class="wb"><path class="wl" d="M3 8h10"/></svg>
      <svg class="wb"><path class="wl" d="M3.500 5.500h7v7h-7zM6 5V3.500h6.500v7H11"/></svg>
      <svg class="wb"><path class="wl" d="M3 3l10 10M13 3L3 13"/></svg>
    </div>
  </nav>

  <div class="tabbar">
    <svg class="hamb"><use href="#ham"/></svg>
    <i class="slash"></i>
    <span class="starttab">开始</span>
    <div class="doctab"><span>哈尔滨某剪力墙住宅结构设计图*</span><b>×</b></div>
    <svg class="addtab"><use href="#plus"/></svg>
    <i class="slash"></i>
  </div>

  <section class="toolarea">
    <div class="row r1">
      <div class="grp g11"><i class="hd"></i>
        <svg class="ic"><use href="#new"/></svg><svg class="ic"><use href="#open"/></svg><svg class="ic dim"><use href="#save"/></svg><i class="sep"></i>
        <svg class="ic"><use href="#plot"/></svg><svg class="ic"><use href="#preview"/></svg><svg class="ic"><use href="#publish"/></svg><svg class="ic"><use href="#dwf"/></svg><i class="sep"></i>
        <svg class="ic"><use href="#cut"/></svg><svg class="ic"><use href="#copy"/></svg><svg class="ic"><use href="#paste"/></svg><svg class="ic"><use href="#match"/></svg><svg class="ic"><use href="#bedit"/></svg><i class="sep"></i>
        <svg class="ic"><use href="#undo"/></svg><i class="dd ddb"></i><svg class="ic"><use href="#redo"/></svg><i class="dd ddb"></i><i class="sep"></i>
        <svg class="ic"><use href="#pan"/></svg><svg class="ic"><use href="#zoomr"/></svg><svg class="ic"><use href="#zoomw"/></svg><svg class="ic"><use href="#zoomp"/></svg><i class="sep"></i>
        <svg class="ic"><use href="#props"/></svg><svg class="ic"><use href="#sset"/></svg><svg class="ic"><use href="#tpal"/></svg><svg class="ic"><use href="#dcent"/></svg><svg class="ic"><use href="#mark"/></svg><svg class="ic"><use href="#calc"/></svg><i class="sep"></i>
        <svg class="ic"><use href="#help"/></svg>
      </div>
      <div class="grp g12"><i class="hd"></i>
        <svg class="ic"><use href="#lyr"/></svg>
        <div class="sel layersel">
          <svg class="mini"><path class="y" d="M7 1a5 5 0 0 1 3 9v3H4v-3a5 5 0 0 1 3-9z"/><path class="g" d="M5 14h4v2H5z"/></svg>
          <svg class="mini"><circle class="y" cx="8" cy="8" r="4"/><path class="ys" d="M8 0v3M8 13v3M0 8h3M13 8h3M2 2l2 2M12 12l2 2M2 14l2-2M12 4l2-2"/></svg>
          <svg class="mini wide"><path class="ks" d="M2 2h12v12H2z"/><circle class="y" cx="12" cy="13" r="3"/></svg>
          <svg class="mini"><path class="y" d="M2 8h11v8H2z"/><path class="ys" d="M5 8V4a3 3 0 0 1 6 0"/></svg>
          <i class="swatch"></i><span class="layername">梁_实线</span>
          <svg class="chev"><use href="#chev"/></svg>
        </div>
        <svg class="ic"><use href="#lyr1"/></svg><svg class="ic"><use href="#lyr2"/></svg><svg class="ic"><use href="#lyr3"/></svg>
      </div>
      <i class="hd hd2"></i>
      <div class="sel s1"><i class="swatch"></i><span>ByLayer</span><svg class="chev"><use href="#chev"/></svg></div>
      <i class="hd hd2"></i>
      <div class="sel s2"><i class="ltline l1"></i><span>ByLayer</span><svg class="chev"><use href="#chev"/></svg></div>
      <i class="hd hd2"></i>
      <div class="sel s3"><i class="ltline l2"></i><span>ByLayer</span><svg class="chev"><use href="#chev"/></svg></div>
      <div class="sel s4"><span>ByColor</span><svg class="chev lite"><use href="#chev"/></svg></div>
    </div>

    <div class="row r2">
      <div class="grp g21"><i class="hd"></i>
        <svg class="ic"><use href="#dl"/></svg><svg class="ic"><use href="#da"/></svg><svg class="ic"><use href="#darc"/></svg><svg class="ic"><use href="#dord"/></svg><i class="sep"></i>
        <svg class="ic"><use href="#drad"/></svg><svg class="ic"><use href="#djog"/></svg><svg class="ic"><use href="#ddia"/></svg><svg class="ic"><use href="#dang"/></svg><i class="sep"></i>
        <svg class="ic"><use href="#qdim"/></svg><svg class="ic"><use href="#dbase"/></svg><svg class="ic"><use href="#dcont"/></svg><svg class="ic"><use href="#dsp"/></svg><svg class="ic"><use href="#dbrk"/></svg><i class="sep"></i>
        <svg class="ic"><use href="#tol"/></svg><svg class="ic"><use href="#cm"/></svg><svg class="ic"><use href="#insp"/></svg><svg class="ic"><use href="#djl"/></svg><i class="sep"></i>
        <svg class="ic"><use href="#dedit"/></svg><svg class="ic"><use href="#dtxt"/></svg><svg class="ic"><use href="#dupd"/></svg><i class="sep"></i>
        <div class="sel normal"><span>NORMAL</span><svg class="chev"><use href="#chev"/></svg></div>
        <svg class="ic"><use href="#dsty"/></svg>
      </div>
      <div class="grp g22"><i class="hd"></i>
        <svg class="ic"><use href="#sol1"/></svg><svg class="ic"><use href="#sol2"/></svg><svg class="ic"><use href="#sol3"/></svg><i class="sep"></i>
        <svg class="ic"><use href="#sf1"/></svg><svg class="ic"><use href="#sf2"/></svg><svg class="ic"><use href="#sf3"/></svg><svg class="ic"><use href="#sf4"/></svg><svg class="ic"><use href="#sf5"/></svg><svg class="ic"><use href="#sf6"/></svg><svg class="ic"><use href="#sf7"/></svg><svg class="ic"><use href="#sf8"/></svg><i class="sep"></i>
        <svg class="ic"><use href="#im1"/></svg><svg class="ic"><use href="#im2"/></svg><svg class="ic"><use href="#im3"/></svg><svg class="ic"><use href="#im4"/></svg><i class="sep"></i>
        <svg class="ic"><use href="#im5"/></svg><svg class="ic"><use href="#im6"/></svg><svg class="ic"><use href="#im7"/></svg><svg class="ic"><use href="#im8"/></svg><svg class="ic"><use href="#im9"/></svg>
      </div>
    </div>

    <div class="row r3">
      <div class="grp g31"><i class="hd"></i>
        <svg class="ic"><use href="#nt1"/></svg><svg class="ic"><use href="#nt2"/></svg><svg class="ic"><use href="#nt3"/></svg>
      </div>
    </div>
  </section>

  <main class="main">
    <aside class="rail left">
      <div class="vbar"><i class="hdh"></i>
        <svg class="vi"><use href="#line"/></svg><svg class="vi"><use href="#xline"/></svg><svg class="vi"><use href="#pl"/></svg><svg class="vi"><use href="#pgon"/></svg><svg class="vi"><use href="#rect"/></svg><svg class="vi"><use href="#arc"/></svg><svg class="vi"><use href="#circ"/></svg><svg class="vi"><use href="#cloud"/></svg><svg class="vi"><use href="#spl"/></svg><svg class="vi"><use href="#ell"/></svg><svg class="vi"><use href="#ella"/></svg><svg class="vi"><use href="#ins"/></svg><svg class="vi"><use href="#blk"/></svg><svg class="vi"><use href="#pt"/></svg><svg class="vi"><use href="#hat"/></svg><svg class="vi"><use href="#grad"/></svg><svg class="vi"><use href="#reg"/></svg><svg class="vi"><use href="#tbl"/></svg><span class="vtxt">A</span><svg class="vi"><use href="#addsel"/></svg>
      </div>
    </aside>

    <div class="view">
      <canvas id="cad" width="1535" height="1055"></canvas>
      <div class="compass">
        <div class="ring"></div>
        <span class="dir n">北</span><span class="dir s">南</span><span class="dir w">西</span><span class="dir e">东</span>
        <div class="cubeface"><span>上</span></div>
      </div>
      <div class="wcs">WCS<i class="dd ddw"></i></div>
      <svg class="ucs"><path class="ax" d="M8.500 17v50M8.500 64.500H56M5.500 59.500h9v9h-9z"/><text class="axt" x="15" y="13">Y</text><text class="axt" x="66" y="62">X</text></svg>
      <div class="cmdlog">
        <div><span>命令: '_.zoom</span></div>
        <div><span>指定窗口的角点，输入比例因子 (nX 或 nXP)，或者</span></div>
        <div><span>[全部(A)/中心(C)/动态(D)/范围(E)/上一个(P)/比例(S)/窗口(W)/对象(O)] &lt;实时&gt;: _e</span></div>
      </div>
      <i class="xh-h"></i><i class="xh-v"></i><i class="pick"></i>
      <div class="cmdbar">
        <div class="cmdtools"><i class="hdv"></i><b>×</b><svg class="wrench"><path class="f" d="M3 17l5-8c-1-3 1-7 6-7l-2 3 2 2 3-1c0 4-4 6-7 5l-5 7z"/></svg></div>
        <div class="cmdinput">
          <svg class="term"><path class="tf" d="M1 2h15v12H1z"/><path class="ts" d="M3 6l3 2-3 2M7 11h4"/></svg><i class="dd ddk"></i>
          <span>键入命令</span><i class="up"></i>
        </div>
      </div>
    </div>

    <aside class="rail right">
      <div class="vbar"><i class="hdh"></i>
        <svg class="vi"><use href="#era"/></svg><svg class="vi"><use href="#cop"/></svg><svg class="vi"><use href="#mir"/></svg><svg class="vi"><use href="#off"/></svg><svg class="vi"><use href="#arr"/></svg><svg class="vi"><use href="#mov"/></svg><svg class="vi"><use href="#rot"/></svg><svg class="vi"><use href="#sca"/></svg><svg class="vi"><use href="#str"/></svg><svg class="vi"><use href="#trim"/></svg><svg class="vi"><use href="#ext"/></svg><svg class="vi"><use href="#brkp"/></svg><svg class="vi"><use href="#brk"/></svg><svg class="vi"><use href="#join"/></svg><svg class="vi"><use href="#cha"/></svg><svg class="vi"><use href="#fil"/></svg><svg class="vi"><use href="#ble"/></svg><svg class="vi"><use href="#expl"/></svg>
      </div>
    </aside>
  </main>

  <div class="layoutbar">
    <svg class="hamb"><use href="#ham"/></svg>
    <div class="modeltab">模型</div>
    <span class="ltab">布局1</span><i class="slash"></i>
    <svg class="addtab"><use href="#plus"/></svg><i class="slash"></i>
  </div>

  <footer class="statusbar">
    <div class="box b-left"></div>
    <div class="box b-coord">812771, -400275, 0</div>
    <div class="box b-model">模型</div>
    <div class="box b-grid"><svg class="st"><use href="#grid"/></svg><svg class="st"><use href="#dots"/></svg><i class="dd ddt"></i></div>
    <div class="box b-a"><svg class="st"><use href="#infer"/></svg><span class="on"><svg class="st"><use href="#dyn"/></svg></span><svg class="st"><use href="#orth"/></svg><svg class="st"><use href="#pol"/></svg><i class="dd ddt"></i><svg class="st"><use href="#osn"/></svg><i class="dd ddt"></i></div>
    <div class="box b-b"><svg class="st"><use href="#iso"/></svg><span class="on wide2"><svg class="st"><use href="#dsp2"/></svg></span><i class="dd ddt"></i><svg class="st"><use href="#lw"/></svg><span class="on"><svg class="st"><use href="#trn"/></svg></span><svg class="st"><use href="#sel"/></svg><svg class="st"><use href="#cube"/></svg><i class="dd ddt"></i></div>
    <div class="box b-c"><span class="on"><svg class="st"><use href="#sma"/></svg></span><svg class="st"><use href="#box3"/></svg><i class="dd ddt"></i><span class="on"><svg class="st"><use href="#gizmo"/></svg></span><i class="dd ddt"></i></div>
    <div class="box b-d"><span class="on"><svg class="st"><use href="#ann1"/></svg></span><svg class="st"><use href="#ann2"/></svg><svg class="st"><use href="#ann3"/></svg><span class="scale">1:1 / 100%</span><i class="dd ddt"></i></div>
    <div class="box b-e"><svg class="st"><use href="#gear"/></svg><i class="dd ddt"></i></div>
    <div class="box b-f"><svg class="st"><use href="#plus"/></svg></div>
    <div class="box b-g"><svg class="st"><use href="#ruler"/></svg><span class="unit">小数</span><i class="dd ddt"></i></div>
    <div class="box b-h"><svg class="st"><use href="#qp"/></svg></div>
    <div class="box b-i"><svg class="st"><use href="#lock"/></svg><i class="dd ddt"></i></div>
    <div class="box b-j"><svg class="st"><use href="#iso2"/></svg></div>
    <div class="box b-j"><span class="on"><svg class="st"><use href="#hw"/></svg></span></div>
    <div class="box b-j"><svg class="st"><use href="#annm"/></svg></div>
    <div class="box b-j"><svg class="st"><use href="#full"/></svg></div>
    <div class="box b-j"><svg class="st"><use href="#ham"/></svg></div>
  </footer>

  <div class="marks">
    <span class="wm wm1">知末网www.znzmo.com</span><span class="wm wm2">知末网www.znzmo.com</span><span class="wm wm3">知末网www.znzmo.com</span>
    <span class="wm wm4">知末网www.znzmo.com</span><span class="wm wm5">知末网www.znzmo.com</span><span class="wm wm6">知末网www.znzmo.com</span><span class="wm wm7">知末网www.znzmo.com</span>
    <span class="wm wm8">知末网www.znzmo.com</span><span class="wm wm9">知末网www.znzmo.com</span><span class="wm wm10">知末网www.znzmo.com</span>
    <span class="zm">知末</span>
    <span class="idmark">ID: 1180618038</span>
  </div>
</div>
<script src="drawing.js"></script>
</body>
</html>
```
FILE: styles.css
```css
*{box-sizing:border-box}
html,body{margin:0;padding:0;background:#fff}
body{width:1600px;height:1269px;overflow:hidden;font:12px "Open Sans","Noto Sans CJK SC",sans-serif;color:#d5d8dd}
i{font-style:normal;display:block;flex:none}
.sprite{position:absolute;width:0;height:0}

/* icon paint */
.s{fill:none;stroke:#dfe3e8;stroke-width:1.4}
.b{fill:none;stroke:#5ab4f0;stroke-width:1.4}
.d{fill:none;stroke:#4a5360;stroke-width:1.3}
.f{fill:#e3e6ea}
.g{fill:#a0a7b1}
.k{fill:#323a47}
.u{fill:#5ab4f0}
.ub{fill:#4fa6e6}
.ubb{fill:none;stroke:#fff;stroke-width:1.5}
.y{fill:#f2a71b}
.ys{fill:none;stroke:#f2a71b;stroke-width:1.6}
.y2{fill:#f6d27e}
.fr{fill:#e2474f}
.fw{fill:#f3d9a5}
.r{fill:#c8323c}
.n{fill:#3fcf6b}
.nl{fill:none;stroke:#3fcf6b;stroke-width:2}
.ng{fill:none;stroke:#45c96a;stroke-width:2.200}
.t{fill:#d9a45c}
.t2{fill:none;stroke:#e39a55;stroke-width:1.3}
.h{fill:#dfe1e4}
.h2{fill:#5a9fd8;stroke:#e7eaee;stroke-width:1.300}
.w{fill:#fff}
.w2{fill:none;stroke:#fff;stroke-width:1.700}
.s2{fill:none;stroke:#e3e6ea;stroke-width:1.500}
.gr{fill:#5ab4f0;opacity:.75}
.xr{fill:none;stroke:#e2474f;stroke-width:1.500}
.xg{fill:none;stroke:#3fcf6b;stroke-width:1.500}
.cv{fill:none;stroke:#888;stroke-width:1.100}
.lite .cv{stroke:#bbb}
.ks{fill:none;stroke:#666;stroke-width:1.300;stroke-dasharray:3 1}
.lens{fill:none;stroke:#e8a13a;stroke-width:1.600}
.tdwf{fill:#fff;font:bold 6px "Liberation Sans",sans-serif;text-anchor:middle}
.thelp{fill:#2a3240;font:bold 13px "Open Sans",sans-serif;text-anchor:middle}
.wl{fill:none;stroke:#e4e6ea;stroke-width:1.100}

/* window */
.win{position:relative;width:1600px;height:1269px;border:2px solid #0a8fd6;border-radius:8px;background:#222a36;display:flex;flex-direction:column;overflow:hidden}
.ic{width:18px;height:18px;flex:none;margin:0 1.750px}
.dim{opacity:.55}
.dd{width:0;height:0;border:3px solid transparent;border-top:4px solid #cfd3d9;border-bottom:0;margin:0 5px}

/* title */
.titlebar{height:28px;display:flex;align-items:center;flex:none;padding-bottom:2px}
.qat{width:501px;display:flex;align-items:center;padding-left:12px}
.qat .ic{margin:0 2.150px}
.qat>.ic:first-of-type{margin-left:6px}
.logo{width:22px;height:22px;background:#d5163c;border-bottom:3px solid #8a0f2a;border-right:2px solid #a3102e;color:#fff;font:bold 15px "Open Sans",sans-serif;text-align:center;line-height:18px;flex:none;border-radius:2px}
.ddt{margin:0 3.500px}
.ddl{width:8px;height:5px;border-top:1px solid #cfd3d9;margin:0 3px 0 2px;position:relative}
.ddl::after{content:"";display:block;margin-top:1px;width:0;height:0;border:4px solid transparent;border-top:4px solid #cfd3d9;border-bottom:0}
.sharetxt{color:#52aee8;font-size:12px;margin-left:1px}
.apptitle{width:495px;display:flex;gap:15px;font-size:11.800px;color:#d8dbe0;white-space:nowrap;align-items:center}
.fname{font-size:11.300px}
.tri{width:0;height:0;border:4px solid transparent;border-left:5px solid #d0d4da;border-right:0;margin-right:3px}
.search{width:169px;height:20px;background:#3b4453;color:#8f96a2;font-style:italic;font-size:11px;line-height:20px;padding-left:3px;margin-right:1px}
.user{margin-left:3px}
.login{font-size:12px;margin-left:1px}
.ddlogin{margin-left:55px;margin-right:8px}
.cart{margin-right:2px}
.vsep{width:1px;height:18px;background:#4a5360;margin:0 5px 0 4px}
.helpic{margin:0}
.winbtns{margin-left:auto;display:flex;gap:27px;margin-right:11px}
.wb{width:16px;height:16px;flex:none}

/* menu */
.menubar{height:20px;flex:none;display:flex;align-items:center;gap:23px;padding-left:15px;font-size:11.500px;color:#c6cad1;border-bottom:2px solid #2f3744;position:relative;white-space:nowrap}
.docbtns{margin-left:auto;display:flex;gap:13px;margin-right:9px}

/* tabs */
.tabbar{height:24px;flex:none;display:flex;align-items:center;background:#1f2631;padding-left:17px}
.hamb{width:18px;height:16px;flex:none}
.slash{width:1px;height:16px;background:#4d5664;transform:skewX(-25deg);margin:0 12px}
.tabbar .slash:first-of-type{margin:0 10px}
.starttab{width:32px;color:#cfd3d9;font-size:11.500px}
.doctab{width:204px;height:24px;margin-left:-1px;background:#3b4453;clip-path:polygon(6px 0,100% 0,calc(100% - 6px) 100%,0 100%);display:flex;align-items:center;padding-left:15px;color:#fff;font-weight:700;font-size:11px;white-space:nowrap}
.doctab b{margin-left:8px;color:#a4aab4;font-size:15px;font-weight:700}
.addtab{width:16px;height:16px;flex:none;margin-left:7px}

/* toolbars */
.toolarea{height:80px;flex:none;background:#3b4453;padding:4px 0 0 2px;display:flex;flex-direction:column}
.row{display:flex;align-items:stretch;flex:none}
.r1{height:22px}
.r2{height:24px;margin-top:2px}
.r3{height:22px;margin-top:2px}
.grp{display:flex;align-items:center;border:1px solid #2c3441;flex:none;padding-left:1px}
.g11{width:606px}
.g12{width:380px;margin-left:1px}
.g21{width:603px}
.g22{width:456px}
.g31{width:73px}
.hd{width:6px;height:16px;flex:none;background:repeating-linear-gradient(#aeb4bc 0 1px,transparent 1px 2px) 1px 0/3px 100% no-repeat}
.hd2{width:6px;height:22px;background-position:1px 3px;background-size:3px 16px}
.sep{width:1px;height:18px;background:#667080;margin:0 2.500px}
.ddb{border-width:4px;border-top-width:5px;border-bottom:0;margin:0 2px}
.sel{background:#fff;color:#222;height:22px;display:flex;align-items:center;flex:none;position:relative;font-size:11.500px;border-radius:1px}
.chev{width:10px;height:7px;position:absolute;right:7px;top:8px}
.layersel{width:282px;padding-left:3px;gap:1px}
.mini{width:16px;height:16px;flex:none}
.swatch{width:13px;height:13px;background:#00ffff;border:1px solid #555;flex:none;margin-left:1px}
.layername{margin-left:5px;font-family:"Noto Sans CJK SC",sans-serif}
.s1{width:141px;padding-left:4px}
.s1 span{margin-left:1px}
.s2.sel{width:149px;padding-left:5px}
.ltline{height:1px;background:#111;flex:none}
.l1{width:57px}
.l2{width:33px}
.s2.sel span{margin-left:2px}
.s3{width:118px;padding-left:5px}
.s3 span{margin-left:4px}
.s4{width:112px;margin-left:5px;padding-left:8px;color:#999}
.normal{width:113px;margin-left:2px;padding-left:15px;height:21px}
.normal .chev{top:7px}

/* main */
.main{height:1055px;flex:none;display:flex;background:#3b4453}
.rail{flex:none;padding-top:1px}
.rail.left{width:29px;padding-left:2px}
.rail.left .vbar{width:22px}
.rail.right{width:32px;padding-left:3px}
.vbar{width:23px;border:1px solid #2c3441;display:flex;flex-direction:column;align-items:center}
.hdh{width:14px;height:8px;margin-top:1px;flex:none;background:repeating-linear-gradient(90deg,#aeb4bc 0 1px,transparent 1px 2px) 0 2px/100% 3px no-repeat}
.vi{width:18px;height:18px;margin:1.250px 0;flex:none}
.vtxt{height:20.500px;font:700 18px/20px "Open Sans",sans-serif;color:#e3e6ea}
.view{position:relative;width:1535px;height:1055px;flex:none;background:#000;overflow:hidden}
#cad{display:block}

/* compass */
.compass{position:absolute;left:1380px;top:0;width:155px;height:150px}
.ring{position:absolute;left:21px;top:21px;width:113px;height:113px;border:13px solid #2d2d2d;border-radius:50%}
.dir{position:absolute;width:24px;height:24px;text-align:center;line-height:24px;font-size:18px;color:#8c8c8c;font-family:"Noto Sans CJK SC",sans-serif}
.dir.n{left:65px;top:13px}
.dir.s{left:65px;top:118px}
.dir.w{left:12px;top:64px}
.dir.e{left:118px;top:64px}
.cubeface{position:absolute;left:53px;top:53px;width:49px;height:49px;background:#a5a5a5;padding:9px}
.cubeface span{display:block;width:31px;height:31px;background:#8e8f95;color:#4a4a4e;font:200 26px/30px "Noto Sans CJK SC",sans-serif;text-align:center}
.wcs{position:absolute;left:1435px;top:159px;width:44px;height:16px;border-radius:5px;background:#66666e;border:1px solid #77777e;color:#9a9aa0;font:10px/14px "Liberation Sans",sans-serif;padding-left:3px;display:flex;align-items:center}
.ddw{border-top-color:#8c8c92;margin-left:5px}

/* ucs / crosshair */
.ucs{position:absolute;left:16px;top:966px;width:90px;height:72px}
.ax{fill:none;stroke:#cfcfcf;stroke-width:1}
.axt{fill:#cfcfcf;font:16px "Liberation Sans",sans-serif;text-anchor:middle}
.xh-h{position:absolute;left:0;right:0;top:1027px;height:1px;background:#eee}
.xh-v{position:absolute;left:1488px;top:0;bottom:0;width:1px;background:#c4c4c4}
.pick{position:absolute;left:1483px;top:1022px;width:11px;height:11px;border:1px solid #eee}

/* command */
.cmdlog{position:absolute;left:429px;top:976px;font:11.500px/14px "Liberation Mono","Noto Sans CJK SC",monospace;color:#c4c4c4;white-space:nowrap}
.cmdlog div{height:14px;margin-bottom:5px}
.cmdlog span{display:inline-block;height:14px;background:#545454;padding:0 1px;border-radius:2px}
.cmdbar{position:absolute;left:368px;top:1030px;width:797px;height:24px;display:flex}
.cmdtools{width:55px;flex:none;background:#222a36;display:flex;align-items:center;gap:7px;padding-left:3px;color:#cfd3d9}
.cmdtools b{font-size:15px;font-weight:700;line-height:16px}
.hdv{width:4px;height:18px;background:repeating-linear-gradient(#aeb4bc 0 1px,transparent 1px 2px)}
.wrench{width:20px;height:20px;flex:none}
.cmdinput{flex:1;background:#b3b3b3;display:flex;align-items:center;padding-left:4px;border-radius:0 2px 2px 0;position:relative;color:#666;font-style:italic;font-size:11.500px}
.term{width:17px;height:16px;flex:none}
.tf{fill:#555;stroke:#333}
.ts{fill:none;stroke:#ddd}
.ddk{border-top-color:#444;margin:0 6px 0 2px}
.up{position:absolute;right:5px;top:10px;width:0;height:0;border:4px solid transparent;border-bottom:5px solid #444;border-top:0}

/* layout bar */
.layoutbar{height:27px;flex:none;margin-top:4px;display:flex;align-items:center;padding:0 0 5px 15px;background:#222a36;color:#d5d8dd;font-size:11.500px;box-shadow:0 -4px 0 #3b4453}
.modeltab{width:50px;height:22px;margin-left:8px;background:#3b4453;clip-path:polygon(7px 0,100% 0,calc(100% - 7px) 100%,0 100%);display:flex;align-items:center;justify-content:center;font-weight:700;color:#fff}
.ltab{margin-left:10px}
.layoutbar .slash{margin:0 8px}
.layoutbar .addtab{margin-left:5px}

/* status */
.statusbar{height:27px;flex:none;display:flex;align-items:flex-start;gap:2.500px;padding:1px 0 0 4px;background:#222a36;position:relative;font-size:11.500px;color:#dfe2e6}
.box{height:23px;background:#3b4453;display:flex;align-items:center;justify-content:space-around;flex:none;white-space:nowrap}
.st{width:17px;height:17px;flex:none}
.box .dd{margin:0}
.on{background:#5b9bd5;height:23px;width:22px;display:flex;align-items:center;justify-content:center;flex:none}
.wide2{width:21px}
.b-left{width:453px}
.b-coord{width:131px;justify-content:flex-end;padding-right:3px;font-size:10.800px}
.b-model{width:28px}
.b-grid{width:60px}
.b-a{width:145px}
.b-b{width:167px}
.b-c{width:96px}
.b-d{width:137px}
.b-e{width:38px}
.b-f{width:21px}
.b-g{width:90px}
.b-h{width:23px}
.b-i{width:37px}
.b-j{width:24px}
.scale{font-size:11px;margin:0 -3px}
.unit{margin-right:18px}

/* overlay marks */
.marks{position:absolute;left:-2px;top:-2px;width:1600px;height:1269px;pointer-events:none;overflow:hidden}
.wm{position:absolute;transform-origin:0 100%;transform:rotate(-45deg);font:400 40px/1 "Liberation Sans","Noto Sans CJK SC",sans-serif;color:rgba(255,255,255,.06);-webkit-text-stroke:3px rgba(255,255,255,.09);paint-order:stroke fill;white-space:nowrap}
.wm1{left:45px;top:351px}
.wm2{left:575px;top:351px}
.wm3{left:1126px;top:351px}
.wm4{left:-129px;top:708px}
.wm5{left:422px;top:708px}
.wm6{left:973px;top:708px}
.wm7{left:1524px;top:708px}
.wm8{left:269px;top:1085px}
.wm9{left:820px;top:1085px}
.wm10{left:1371px;top:1085px}
.zm{position:absolute;left:1406px;top:1125px;font:500 62px/1.300 "Noto Sans CJK SC",sans-serif;color:rgba(210,210,210,.92)}
.idmark{position:absolute;left:1360px;top:1209px;font:500 31px/42px "Noto Sans",sans-serif;color:#fff;white-space:nowrap}
```
FILE: drawing.js
```js
// Paints the model-space sheets onto the CAD canvas.
var cv = document.getElementById('cad'), c = cv.getContext('2d');
var OX = 31, OY = 154;
var seed = 4711;
function R() { seed = (seed * 16807) % 2147483647; return seed / 2147483647; }
function rect(col, x, y, w, h) { c.fillStyle = col; c.fillRect(Math.round(x), Math.round(y), Math.max(1, Math.round(w)), Math.max(1, Math.round(h))); }
function box(col, x, y, w, h) { rect(col, x, y, w, 1); rect(col, x, y + h - 1, w, 1); rect(col, x, y, 1, h); rect(col, x + w - 1, y, 1, h); }
function pick(a) { return a[Math.floor(R() * a.length)]; }

var G = '#00e000', W = '#ffffff', RD = '#e00000', DR = '#a01010', Y = '#ffff00', C = '#00ffff', M = '#ff00ff', T = '#00b8b8', BL = '#2030d0';

function scatter(x, y, w, h, pal, n, ell) {
  for (var i = 0; i < n; i++) {
    var px = x + R() * w, py = y + R() * h;
    if (ell) {
      var dx = (px - x - w / 2) / (w / 2), dy = (py - y - h / 2) / (h / 2);
      if (dx * dx + dy * dy > 1) continue;
    }
    rect(pick(pal), px, py, 1 + Math.floor(R() * 2.4), 1 + Math.floor(R() * 1.6));
  }
}

function plan(x, y, w, h, mode) {
  var n = Math.round(w / 7), i, tx;
  var ix = x + 6, iy = y + 9, iw = w - 12, ih = h - 18;
  if (mode === 'r' || mode === 'w' || mode === 'm') {
    for (i = 0; i <= 12; i++) rect(mode === 'r' ? '#c03010' : RD, ix + i * iw / 12, iy - 1, 1, ih + 2);
    for (i = 0; i <= 4; i++) rect(mode === 'r' ? '#c03010' : RD, ix, iy + i * ih / 4, iw, 1);
  }
  if (mode === 'r') { scatter(ix, iy, iw, ih, [G, G, '#c03010', Y], iw * ih / 14); }
  if (mode === 'w') { scatter(ix, iy, iw, ih, [W, W, W, RD, G, M], iw * ih / 7); }
  if (mode === 'm') { scatter(ix, iy, iw * .55, ih, [W, W, W, RD, W], iw * ih / 9); scatter(ix + iw * .5, iy, iw * .5, ih, [G, RD, BL, M, C, W, Y], iw * ih / 10); }
  if (mode === 'y') {
    for (i = 0; i < iw; i += 3) rect(pick([Y, Y, Y, G, BL, M]), ix + i, iy + ih * .3 + R() * ih * .3, 3, 2 + R() * 3);
    for (i = 0; i <= 10; i++) rect(i % 3 ? G : RD, ix + i * iw / 10, iy, 1, ih);
    scatter(ix, iy, iw, ih, [G, G, RD, C], iw * ih / 18);
  }
  if (mode === 'g') {
    for (i = 0; i <= 12; i++) rect(i % 2 ? G : RD, ix + i * iw / 12, iy, 1, ih);
    for (i = 0; i <= 5; i++) rect(i % 2 ? RD : G, ix, iy + i * ih / 5, iw, 1);
    scatter(ix, iy, iw, ih, [G, G, G, RD, C, M, W], iw * ih / 9);
  }
  for (i = 0; i <= n; i++) {
    tx = x + 5 + i * (w - 10) / n;
    rect(G, tx, y + 1, 1, 7); rect(G, tx, y + h - 8, 1, 7);
    rect(W, tx - 1, y, 2, 2); rect(W, tx - 1, y + h - 2, 2, 2);
  }
  rect(G, x + 4, y + 3, w - 8, 1); rect(G, x + 4, y + 7, w - 8, 2);
  rect(G, x + 4, y + h - 4, w - 8, 1); rect(G, x + 4, y + h - 9, w - 8, 2);
  rect(G, x + 4, y + 7, 2, h - 14); rect(G, x + w - 6, y + 7, 2, h - 14);
  for (i = 0; i < 4; i++) { rect(G, x, y + 10 + i * (h - 20) / 3, 5, 1); rect(G, x + w - 5, y + 10 + i * (h - 20) / 3, 5, 1); }
  rect(W, x + w / 2 - 6, y + h + 1, 12, 1); rect(W, x + w / 2 - 8, y + h + 2, 16, 1);
}

function stair(x, y, w, h, pal) {
  rect(RD, x + 4, y + 5, w - 8, 1);
  rect(G, x + 6, y + h - 2, w - 14, 1);
  rect(G, x + 6, y + h - 5, 1, 4);
  rect(G, x, y + h * .4, 8, 1);
  [.08, .34, .58, .86].forEach(function (p) {
    var sx = x + w * p;
    rect(G, sx - 5, y, 1, h - 2); rect(G, sx + 5, y, 1, h - 2);
    rect(W, sx - 6, y, 2, 2); rect(W, sx + 4, y, 2, 2);
    scatter(sx - 5, y + h * .3, 11, h * .55, pal, 60, true);
    rect(RD, sx, y + 5, 1, h - 8);
  });
}

function textTable(x, y, w, h) {
  rect('#eeeeee', x, y, w, h);
  for (var j = 2; j < h; j += 2) rect('#000', x + 1, y + j, w - 2, 1);
  for (var i = 0; i < 12; i++) rect('#555', x + R() * w, y, 1, h);
  rect('#000', x + w * .04, y + 2, 1, h - 3);
}

function notes(x, y, w, h) {
  for (var l = 0; l < h; l += 2) {
    var lw = w * (l < h * .6 ? .55 + R() * .45 : .3 + R() * .35);
    rect(C, x, y + l, lw, 1);
    rect(C, x + R() * 3, y + l + 1, lw * .7, 1);
  }
}

function cyanTable(x, y, w, h) {
  rect('#00a8a8', x, y, w, h);
  for (var i = 0; i < w; i += 4) rect(C, x + i, y, 1, h);
  for (var j = 0; j < h; j += 3) rect(C, x, y + j, w, 1);
  for (i = 0; i < 12; i++) rect(Y, x + R() * w, y + h * .4 + R() * h * .6, 1, 3);
}

function table(x, y, w, h, cols, pal) {
  var cw = w / cols, lim = y + h * .72;
  rect('#d8d8d8', x, y, w, 1);
  for (var i = 0; i <= cols; i++) rect('#d8d8d8', x + i * cw, y, 1, h * .72);
  for (i = 0; i < cols; i++) {
    scatter(x + i * cw + 2, y + h * .2, cw - 4, h * .4, pal || [G, G, RD, RD, W], cw * h / 6, true);
    rect(RD, x + i * cw + cw * .55, y + 2, cw * .3, 4);
  }
  rect('#c8c8c8', x, lim, w, h * .28);
  for (i = 0; i <= cols; i++) {
    rect('#000', x + i * cw + cw * .3, lim + 2, cw * .15, 1);
    rect('#000', x + i * cw + cw * .25, lim + h * .14, cw * .25, 1);
    rect('#000', x, lim + h * .1, w, 1);
  }
}

function blob(x, y, w, h, pal) { scatter(x, y, w, h, pal, w * h / 2.2, true); }
function title(x, y, w) { rect(W, x, y, w, 1); rect(W, x - 1, y + 1, w + 2, 1); }

function frame(x0, y0, x1, y1) {
  var w = x1 - x0, h = y1 - y0;
  box(T, x0, y0, w, h);
  rect(T, x0 + 1, y0 + 1, w - 2, 2);
  rect(T, x0 + 3, y1 - 3, w - 4, 2);
  rect(T, x1 - 3, y0 + 1, 2, h - 2);
  rect(T, x0 + 3, y0 + 1, 2, h - 2);
  rect(T, x0 + 1, y0 + 3, 2, 20);
}

function sheet(x0, y0, x1, y1, ops) {
  frame(x0 - OX, y0 - OY, x1 - OX, y1 - OY);
  var ox = x0 - OX, oy = y0 - OY;
  ops.forEach(function (o) {
    var a = o[1] + ox, b = o[2] + oy;
    switch (o[0]) {
      case 'p': plan(a, b, o[3], o[4], o[5]); break;
      case 'n': notes(a, b, o[3], o[4]); break;
      case 'c': cyanTable(a, b, o[3], o[4]); break;
      case 'f': rect(C, a, b, o[3], o[4]); break;
      case 't': table(a, b, o[3], o[4], o[5], o[6]); break;
      case 'b': blob(a, b, o[3], o[4], o[5]); break;
      case 'l': title(a, b, o[3]); break;
      case 'x': box(W, a, b, o[3], o[4]); break;
      case 'w': rect(W, a, b, o[3], o[4]); break;
      case 'z': textTable(a, b, o[3], o[4]); break;
      case 'st': stair(a, b, o[3], o[4], o[5]); break;
      case 'd': rect(o[5], a, b, o[3], o[4]); break;
    }
  });
}

var P1 = [W, W, M, G, RD], P2 = [RD, G, Y, RD, W], P3 = [G, RD, Y, C, W], P4 = [Y, Y, RD, W];
var cols = [156, 290, 422], widths = [131, 129, 130];
var rows = [[461, 553], [555, 648], [649, 742], [745, 838], [841, 934]];

function S(ci, ri, ops) { sheet(cols[ci], rows[ri][0], cols[ci] + widths[ci], rows[ri][1], ops); }

S(0, 0, [['p', 16, 19, 113, 42, 'w'], ['b', 9, 68, 27, 17, P1], ['b', 39, 69, 25, 16, P2], ['b', 7, 4, 14, 12, P1], ['w', 97, 69, 14, 12], ['n', 97, 70, 26, 12], ['w', 18, 84, 8, 2]]);
S(1, 0, [['p', 23, 19, 102, 40, 'w'], ['n', 87, 65, 40, 18], ['f', 8, 9, 27, 7], ['b', 5, 20, 14, 10, P2], ['b', 10, 58, 10, 14, P2], ['b', 5, 74, 16, 10, P3], ['b', 26, 74, 12, 9, P4], ['b', 40, 75, 14, 8, P3]]);
S(2, 0, [['l', 50, 6, 22], ['t', 7, 11, 115, 25, 8], ['t', 7, 36, 115, 24, 7], ['t', 7, 60, 52, 25, 4], ['b', 63, 68, 8, 9, P2], ['b', 74, 68, 8, 9, P2], ['b', 85, 68, 14, 9, P2], ['b', 104, 68, 7, 9, P2], ['b', 114, 68, 13, 9, P2]]);
S(0, 1, [['p', 21, 16, 103, 38, 'r'], ['c', 10, 62, 36, 22], ['n', 84, 66, 32, 10]]);
S(1, 1, [['p', 15, 16, 105, 35, 'y'], ['n', 85, 66, 23, 14]]);
S(2, 1, [['p', 15, 15, 106, 37, 'm'], ['n', 90, 66, 28, 14], ['b', 18, 70, 8, 8, P2], ['b', 52, 71, 14, 5, P2]]);
S(0, 2, [['p', 9, 11, 107, 41, 'g'], ['c', 16, 59, 35, 27], ['c', 51, 59, 34, 5], ['n', 93, 64, 33, 8]]);
S(1, 2, [['p', 10, 14, 108, 38, 'y'], ['n', 85, 64, 23, 12]]);
S(2, 2, [['p', 10, 11, 111, 40, 'm'], ['n', 92, 61, 30, 12], ['b', 18, 67, 8, 8, P2], ['b', 32, 63, 14, 12, P2]]);
S(0, 3, [['p', 12, 12, 100, 36, 'g'], ['c', 14, 58, 36, 28], ['c', 50, 58, 34, 5], ['n', 88, 62, 30, 8]]);
S(1, 3, [['p', 10, 12, 108, 37, 'y'], ['n', 85, 60, 24, 12]]);
S(2, 3, [['p', 10, 14, 108, 36, 'm'], ['n', 92, 60, 28, 12]]);
S(0, 4, [['p', 12, 12, 100, 36, 'g'], ['c', 14, 58, 36, 28], ['c', 50, 58, 34, 5], ['n', 88, 62, 30, 8]]);
S(1, 4, [['p', 10, 14, 108, 38, 'g'], ['n', 85, 62, 24, 12]]);
S(2, 4, [['p', 10, 14, 110, 38, 'm'], ['n', 92, 62, 28, 12], ['b', 6, 62, 12, 8, P2], ['b', 18, 70, 14, 12, P1]]);

sheet(572, 461, 703, 553, [['f', 12, 7, 26, 7], ['p', 14, 18, 106, 37, 'w'], ['n', 88, 64, 40, 16]]);
sheet(705, 461, 836, 553, [['l', 50, 6, 22], ['t', 7, 11, 115, 25, 8], ['t', 7, 36, 113, 24, 7], ['t', 7, 60, 53, 25, 4], ['b', 66, 63, 14, 17, P4], ['b', 82, 63, 14, 17, P4], ['b', 102, 63, 16, 17, P4]]);
sheet(837, 461, 968, 553, [['l', 50, 6, 22], ['t', 6, 11, 112, 25, 8], ['t', 6, 36, 117, 25, 8], ['x', 8, 63, 17, 15], ['b', 10, 64, 14, 14, [RD, RD, W]], ['x', 28, 63, 17, 15], ['b', 30, 64, 14, 14, [RD, RD, W]], ['b', 52, 62, 12, 18, [W, RD, Y, C]], ['b', 68, 64, 8, 14, [W, RD]], ['x', 82, 64, 15, 15], ['b', 84, 64, 12, 18, [RD, M, W]], ['b', 98, 65, 8, 14, [W, RD]], ['x', 110, 64, 15, 15], ['b', 112, 65, 12, 16, [RD, M, W]]]);
sheet(970, 461, 1101, 553, [['f', 10, 6, 26, 6], ['p', 12, 16, 106, 38, 'w'], ['n', 86, 64, 30, 14]]);
sheet(1103, 461, 1235, 553, [['l', 50, 6, 22], ['t', 6, 11, 116, 25, 8], ['t', 6, 36, 118, 25, 8], ['t', 6, 61, 54, 25, 4]]);
sheet(1237, 461, 1365, 553, [['l', 50, 6, 22], ['t', 6, 11, 114, 25, 8], ['t', 6, 36, 90, 24, 6]]);
sheet(1371, 461, 1501, 553, [['p', 22, 19, 78, 26, 'r'], ['l', 60, 49, 14], ['b', 12, 20, 6, 5, P2], ['b', 12, 32, 6, 5, P2], ['b', 12, 44, 7, 7, P2], ['b', 12, 60, 8, 6, P2], ['b', 22, 68, 7, 7, P2], ['b', 10, 76, 6, 7, P2], ['b', 22, 78, 7, 6, P2], ['b', 38, 78, 6, 5, P2], ['d', 88, 52, 28, 3, C], ['n', 88, 65, 36, 12]]);

sheet(572, 555, 703, 648, [
  ['st', 22, 6, 86, 26, [Y, Y, C, W, G]], ['st', 22, 35, 86, 26, [RD, M, W, C, G]],
  ['l', 60, 64, 14], ['n', 84, 65, 40, 14]]);

sheet(572, 649, 665, 780, [
  ['d', 10, 12, 2, 100, RD], ['d', 16, 12, 2, 100, RD], ['d', 26, 12, 2, 100, G], ['b', 8, 12, 20, 100, [Y, Y, W, G, RD]], ['b', 4, 100, 18, 14, [G, G, W]], ['d', 9, 12, 22, 2, Y],
  ['b', 43, 8, 25, 16, [W, W, G, G, RD]], ['b', 44, 28, 23, 15, [W, W, G, G]], ['b', 41, 48, 26, 16, [W, W, G, G, RD]], ['b', 42, 74, 6, 8, P3],
  ['d', 83, 2, 8, 58, '#8a1a3a'], ['x', 84, 10, 6, 30], ['n', 56, 71, 25, 13], ['z', 36, 99, 50, 14]]);
sheet(668, 649, 799, 742, [
  ['b', 17, 9, 14, 17, [Y, G, W]], ['b', 36, 5, 22, 13, [W, W, G, RD]], ['b', 42, 22, 14, 12, [Y, G, W]], ['b', 17, 36, 14, 18, [G, Y, W]], ['b', 36, 36, 25, 15, [W, W, G]], ['b', 36, 58, 25, 15, [W, W, G]],
  ['z', 66, 9, 50, 16], ['b', 73, 32, 6, 8, P3], ['b', 86, 32, 6, 8, P1], ['n', 93, 62, 26, 14]]);
sheet(572, 783, 703, 875, [
  ['n', 7, 5, 26, 50], ['n', 7, 55, 26, 20], ['z', 10, 57, 17, 6], ['n', 7, 72, 26, 14], ['z', 6, 80, 28, 7],
  ['n', 36, 8, 27, 26], ['n', 36, 40, 25, 46], ['n', 71, 5, 30, 42], ['z', 73, 47, 24, 5], ['n', 71, 54, 25, 12]]);
sheet(716, 783, 847, 875, [
  ['b', 7, 3, 10, 12, [C, Y, W]], ['b', 24, 4, 14, 12, [RD, G, W]], ['b', 42, 3, 10, 8, [G, W]], ['d', 54, 3, 22, 5, RD], ['b', 62, 9, 10, 6, [RD, Y]], ['b', 81, 4, 16, 12, [G, W]],
  ['b', 7, 17, 9, 12, [C, W]], ['b', 24, 20, 12, 4, [RD, W]], ['b', 42, 18, 8, 14, [C, RD, W]], ['b', 56, 12, 14, 8, [RD, Y, W]], ['b', 68, 22, 14, 10, [C, RD]], ['b', 82, 18, 18, 14, [C, RD, Y]],
  ['b', 8, 34, 8, 8, [Y, G]], ['b', 25, 33, 8, 10, [RD, C]], ['b', 52, 26, 10, 16, [W, RD]], ['b', 8, 44, 8, 12, [W, RD]], ['b', 26, 46, 12, 8, [C, Y, G]], ['b', 42, 45, 14, 8, [G, W]],
  ['d', 66, 47, 35, 5, '#c05030'], ['b', 76, 42, 6, 16, [Y, RD]], ['b', 92, 44, 8, 12, [W, RD, Y]], ['b', 24, 56, 22, 8, [C, G, Y]], ['b', 54, 52, 8, 14, [RD, Y, W]],
  ['z', 10, 60, 12, 5], ['d', 12, 67, 10, 3, Y], ['b', 10, 74, 12, 12, [Y, Y, RD]], ['b', 29, 71, 12, 14, [C, RD]], ['d', 29, 85, 12, 2, Y], ['b', 54, 72, 8, 16, [RD, Y, W]], ['b', 65, 67, 8, 8, [W, RD]], ['b', 79, 67, 20, 6, [C, G]], ['d', 82, 74, 14, 1, Y]]);

var x = 573 - OX, y = 879 - OY;
rect('#999', x, y, 36, 1); rect('#999', x, y + 49, 36, 1); rect('#ccc', x, y, 2, 50); rect('#ccc', x + 34, y, 2, 50);
rect('#ddd', x + 4, y + 3, 29, 44);
rect('#000', x + 6, y + 4, 5, 4);
for (var i = 0; i < 19; i++) rect('#333', x + 4, y + 8 + i * 2, 29, 1);
rect('#444', x + 24, y + 3, 1, 44);
rect('#bbb', x - 1, y - 1, 3, 3); rect('#bbb', x + 34, y - 1, 3, 3); rect('#bbb', x - 1, y + 48, 3, 3); rect('#bbb', x + 34, y + 48, 3, 3);
```
